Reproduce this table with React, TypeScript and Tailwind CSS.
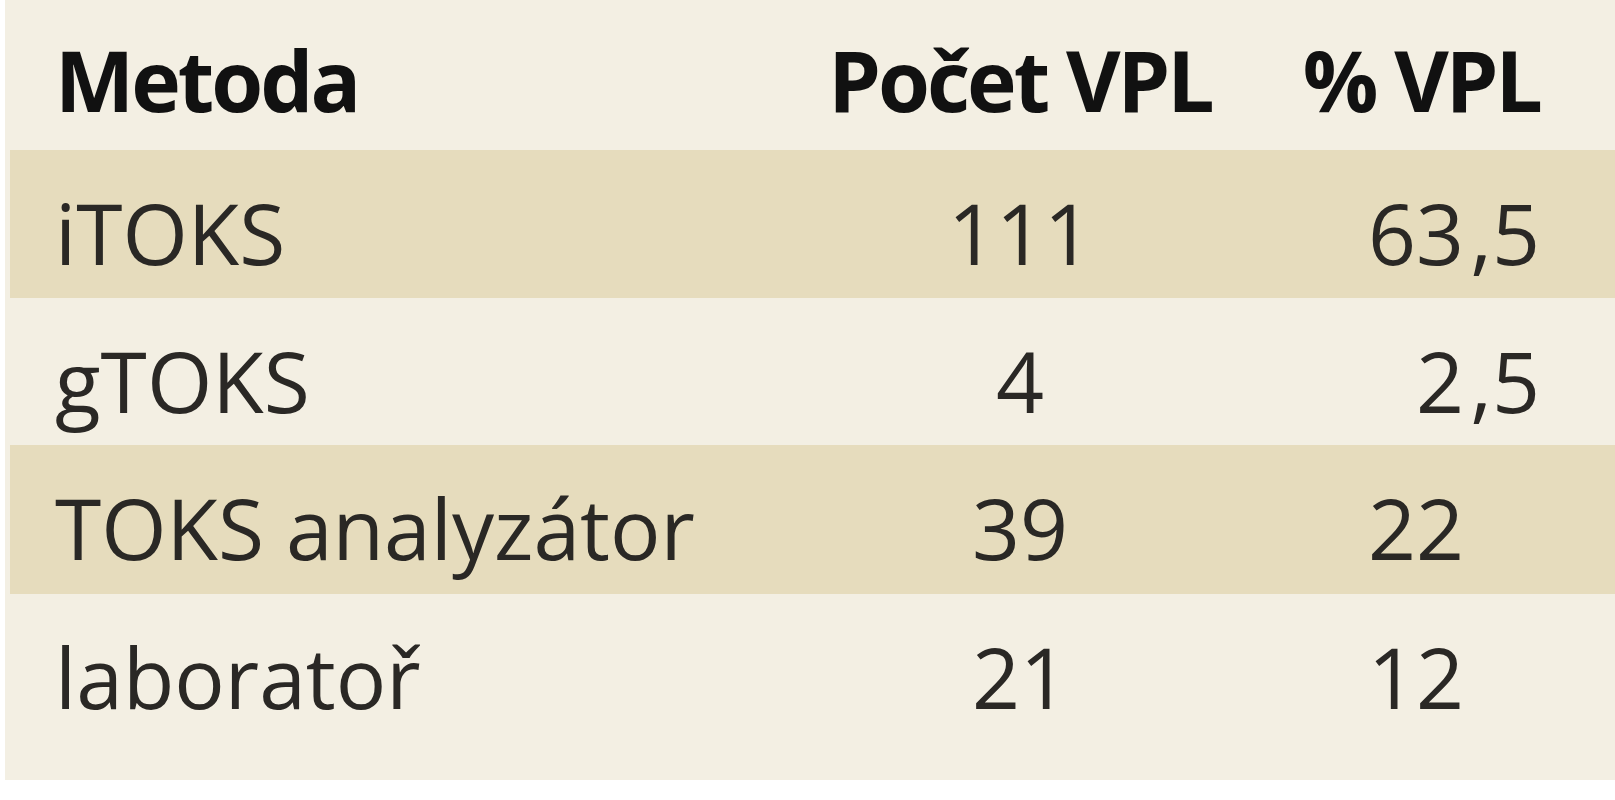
import React from "react";

interface Row {
    method: string;
    count: string;
    whole: string;
    frac: string;
    height: string;
}

const rows: Row[] = [
    { method: "iTOKS", count: "111", whole: "63", frac: ",5", height: "h-[148px]" },
    { method: "gTOKS", count: "4", whole: "2", frac: ",5", height: "h-[147px]" },
    { method: "TOKS analyzátor", count: "39", whole: "22", frac: "", height: "h-[149px]" },
    { method: "laboratoř", count: "21", whole: "12", frac: "", height: "flex-1" },
];

const App: React.FC = () => {
    return (
        <div className="w-[1615px] h-[800px] bg-white pl-[5px] font-['Open_Sans',sans-serif] text-[84px] leading-[84px]">
            <div className="h-[780px] bg-[#f3efe3] pl-[5px] flex flex-col">
                <div className="h-[150px] pt-[38px] grid grid-cols-[810px_400px_1fr] pr-[75px] font-bold text-[#111] tracking-[-3px]">
                    <div className="pl-[45px]">Metoda</div>
                    <div className="text-center">Počet VPL</div>
                    <div className="text-right">% VPL</div>
                </div>
                {rows.map((row, i) => (
                    <div
                      key={row.method}
                      className={`pt-[41px] grid grid-cols-[810px_400px_1fr] pr-[75px] text-[#2a2825] ${row.height} ${
                        i % 2 === 0 ? 'bg-[#e6dcbd]' : ''
                      }`}
                    >
                        <div className="pl-[45px]">{row.method}</div>
                        <div className="text-center">{row.count}</div>
                        <div className="text-right whitespace-nowrap">
                            <span>{row.whole}</span>
                            <span className="inline-block w-[76px] text-right">{row.frac}</span>
                        </div>
                    </div>
                ))}
            </div>
        </div>
    );
};

export default App;
